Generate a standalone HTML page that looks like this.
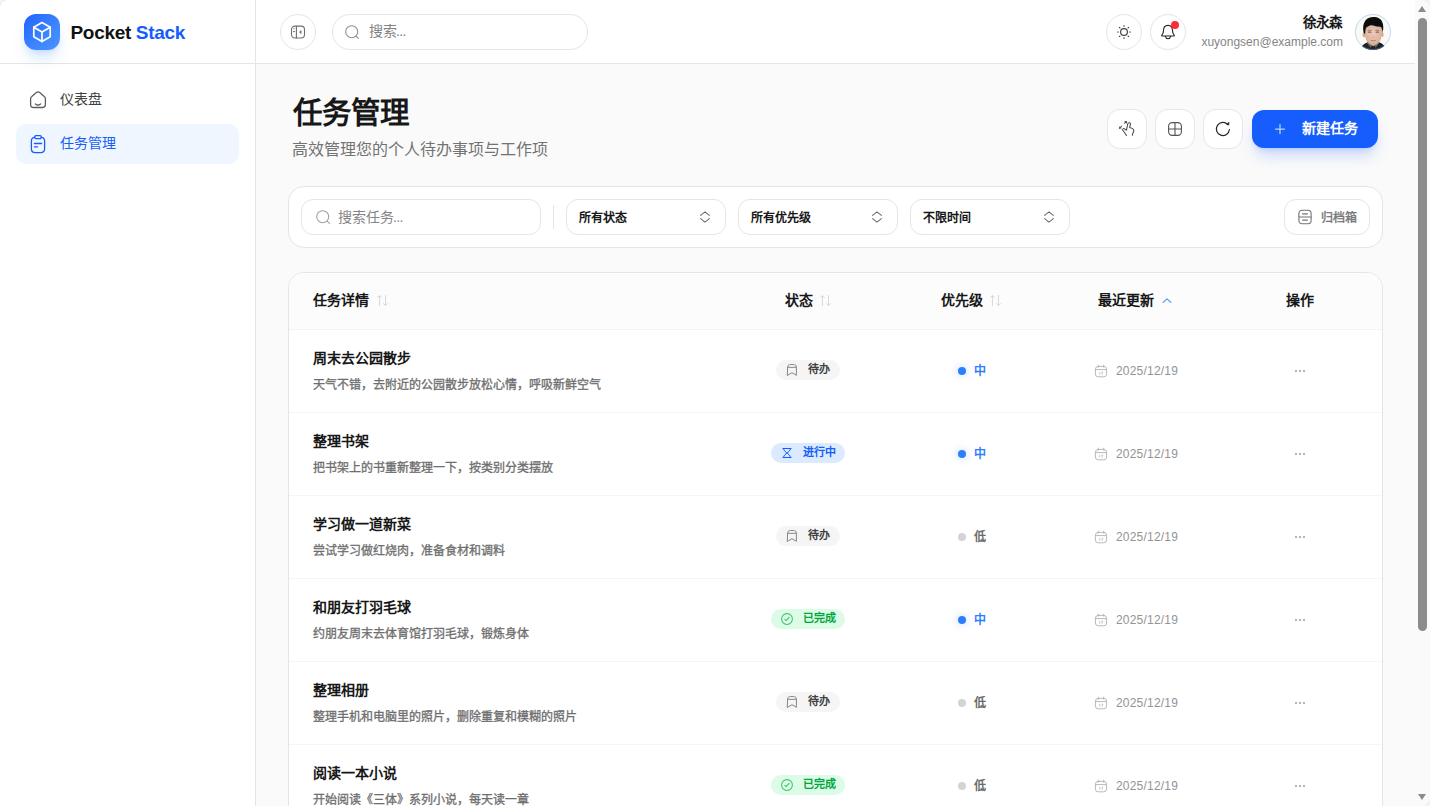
<!DOCTYPE html>
<html lang="zh-CN">
<head>
<meta charset="utf-8">
<title>Pocket Stack</title>
<style>
*{box-sizing:border-box;margin:0;padding:0}
html,body{width:1430px;height:806px;overflow:hidden;background:#fafafa}
body{font-family:"Liberation Sans",sans-serif;color:#171717;position:relative;-webkit-font-smoothing:antialiased}
.abs{position:absolute}
svg{display:block;overflow:visible}
.ic{fill:none;stroke:currentColor;stroke-linecap:round;stroke-linejoin:round}

/* sidebar */
#sidebar{left:0;top:0;width:256px;height:806px;background:#fff;border-right:1px solid #e5e5e5}
#logoRow{left:0;top:0;width:255px;height:64px;border-bottom:1px solid #e5e5e5}
#logo{left:24px;top:14px;width:36px;height:36px;border-radius:12px;background:linear-gradient(135deg,#1f62ff 0%,#3d86ff 60%,#4a94ff 100%);box-shadow:0 10px 15px -3px rgba(43,127,255,.22),0 4px 6px -4px rgba(43,127,255,.22)}
#brand{left:70.5px;top:20.6px;font-size:19px;font-weight:700;line-height:24px;white-space:nowrap;letter-spacing:-0.32px;color:#111}
#brand b{color:#155dfc}
.nav{left:16px;width:223px;height:40px;border-radius:10px;font-size:14px;line-height:40px;color:#404040}
.nav .t{position:absolute;left:44px;top:-0.2px;white-space:nowrap}
.nav.on .t{top:-1.3px}
.nav svg{position:absolute;left:12px;top:10px;color:#5c5c5c}
.nav.on{background:#eff6ff;color:#155dfc;font-weight:500}
.nav.on svg{color:#155dfc}

/* header */
#header{left:256px;top:0;width:1159px;height:64px;background:#fff;border-bottom:1px solid #e5e5e5}
.cbtn{width:36px;height:36px;border-radius:50%;border:1px solid #e5e5e5;background:#fff;top:14px;color:#525252}
#hsearch{left:332px;top:14px;width:256px;height:36px;border-radius:18px;border:1px solid #e5e5e5;background:#fff}
#hsearch .ph{position:absolute;left:36px;top:0;line-height:33px;font-size:14px;color:#828282}
#uname{right:87.8px;top:13px;font-size:13.5px;font-weight:700;line-height:20px;color:#171717;white-space:nowrap}
#umail{right:87px;top:33.5px;font-size:12px;line-height:16px;color:#858585;white-space:nowrap;letter-spacing:0px}
#avatar{left:1355px;top:14px;width:36px;height:36px;border-radius:50%;overflow:hidden;background:#fafaf6}
#avring{left:1354.7px;top:13.7px;width:36.6px;height:36.6px;border-radius:50%;border:1px solid rgba(120,165,255,.42)}

/* scrollbar */
#sb{left:1415px;top:0;width:15px;height:806px;background:#fafafa}
#sb .thumb{position:absolute;left:3px;top:18px;width:9px;height:613px;border-radius:5px;background:#8b8b8b}
#sb .up{position:absolute;left:3.3px;top:6px;width:0;height:0;border-left:4.3px solid transparent;border-right:4.3px solid transparent;border-bottom:6px solid #8b8b8b}
#sb .dn{position:absolute;left:3.3px;top:794px;width:0;height:0;border-left:4.3px solid transparent;border-right:4.3px solid transparent;border-top:6px solid #8b8b8b}

/* title */
#title{left:292.5px;top:93.4px;font-size:29.5px;font-weight:700;line-height:40px;letter-spacing:-0.8px;color:#171717;white-space:nowrap}
#sub{left:292px;top:137.6px;font-size:16px;line-height:24px;color:#737373;white-space:nowrap}
.sbtn{top:109px;width:40px;height:40px;border-radius:13px;border:1px solid #e7e7e7;background:#fff;color:#484848}
#newbtn{left:1252px;top:110px;width:126px;height:38px;border-radius:12px;background:#155dfc;color:#fff;box-shadow:0 10px 15px -3px rgba(21,93,252,.22),0 4px 6px -4px rgba(21,93,252,.22)}
#newbtn .t{position:absolute;left:50px;top:0;line-height:36px;font-size:14px;font-weight:700;white-space:nowrap}

/* filter card */
#fcard{left:288px;top:186px;width:1095px;height:62px;border-radius:16px;border:1px solid #e5e5e5;background:#fff}
.fld{top:199px;height:36px;border-radius:12px;border:1px solid #e5e5e5;background:#fff}
.sel{width:160px;font-size:12px;font-weight:700;color:#171717}
.sel .t{position:absolute;left:11.8px;top:0.6px;line-height:34px;white-space:nowrap}
.sel svg{position:absolute;left:132px;top:11.2px;color:#6b6b6b}

/* table */
#tcard{left:288px;top:272px;width:1095px;height:560px;border-radius:16px;border:1px solid #e5e5e5;background:#fff;overflow:hidden}
#thead{left:0;top:0;width:1093px;height:57px;background:#fcfcfc;border-bottom:1px solid #f4f4f4}
.th{top:0;height:56px;line-height:55px;font-size:14px;font-weight:700;color:#171717;white-space:nowrap}
.row{left:0;width:1093px;height:83px;border-bottom:1px solid #f5f5f5}
.row .tt{position:absolute;left:24px;top:18.2px;font-size:14px;font-weight:700;line-height:20px;color:#171717;white-space:nowrap}
.row .ds{position:absolute;left:24px;top:46.6px;font-size:12px;line-height:16px;color:#6e6e6e;white-space:nowrap;-webkit-text-stroke:0.3px #6e6e6e}
.badge{position:absolute;top:30px;height:20px;border-radius:10px;font-size:11px;font-weight:700;line-height:19px;white-space:nowrap}
.badge svg{position:absolute;left:9px;top:3px}
.badge .t{position:absolute;left:31.8px;top:0px}
.b-todo .t{left:32.1px}
.b-todo{left:487px;width:64px;background:#f5f5f5;color:#404040}
.b-todo svg{color:#858585}
.b-doing{left:482px;width:74px;background:#dbeafe;color:#155dfc}
.b-done{left:482px;width:74px;background:#dcfce7;color:#00a63e}
.b-done svg{color:#3fc272}
.pri{position:absolute;left:669px;top:32px;height:18px;font-size:12px;font-weight:700;line-height:18px;white-space:nowrap}
.pri i{position:absolute;left:0;top:5px;width:8px;height:8px;border-radius:50%}
.pri span{position:absolute;left:15.7px;top:0.1px}
.p-mid{color:#2b7fff}
.p-mid i{background:#2b7fff;box-shadow:0 0 8px rgba(43,127,255,.35)}
.p-low{color:#6b6b6b}
.p-low i{background:#d4d4d4}
.date{position:absolute;left:805px;top:32px;height:18px;font-size:12px;line-height:18px;color:#949494;white-space:nowrap}
.date svg{position:absolute;left:0;top:2px;color:#b5b5b5}
.date span{position:absolute;left:22px;top:0;letter-spacing:0.2px}
.dots{position:absolute;left:1004px;top:34px;color:#9a9a9a}
</style>
</head>
<body>
<!-- SIDEBAR -->
<div id="sidebar" class="abs">
  <div id="logoRow" class="abs"></div>
  <div id="logo" class="abs">
    <svg width="36" height="36" viewBox="0 0 36 36"><g fill="none" stroke="#fff" stroke-width="1.7" stroke-linejoin="round" stroke-linecap="round"><path d="M18 8.6 L26.2 13.2 L26.2 22.8 L18 27.4 L9.8 22.8 L9.8 13.2 Z"/><path d="M9.8 13.2 L18 17.9 L26.2 13.2 M18 17.9 L18 27.4"/></g></svg>
  </div>
  <div id="brand" class="abs">Pocket <b>Stack</b></div>

  <div class="nav abs" style="top:79px">
    <svg width="20" height="20" viewBox="0 0 20 20" class="ic" stroke-width="1.3"><path d="M2.6 9.6 C2.6 8.6 3 8 3.8 7.4 L8.3 3.6 C9.3 2.8 10.7 2.8 11.7 3.6 L16.2 7.4 C17 8 17.4 8.6 17.4 9.6 L17.4 15.6 C17.4 17.6 16.5 18.5 14.5 18.5 L5.5 18.5 C3.5 18.5 2.6 17.6 2.6 15.6 Z"/><path d="M7.4 15 C8.9 16.2 11.1 16.2 12.6 15"/></svg>
    <span class="t">仪表盘</span>
  </div>
  <div class="nav on abs" style="top:124px">
    <svg width="20" height="20" viewBox="0 0 20 20" class="ic" stroke-width="1.3"><path d="M13.3 3.4 C15.7 3.5 16.6 4.5 16.6 7.1 L16.6 14.8 C16.6 17.6 15.6 18.6 12.8 18.6 L7.2 18.6 C4.4 18.6 3.4 17.6 3.4 14.8 L3.4 7.2 C3.4 4.5 4.3 3.5 6.7 3.4"/><rect x="6.7" y="1.7" width="6.6" height="2.9" rx="1.3"/><path d="M6.4 9.5 L13.6 9.5 M6.4 12.8 L9.6 12.8"/></svg>
    <span class="t">任务管理</span>
  </div>
</div>

<!-- HEADER -->
<div id="header" class="abs"></div>
<div class="cbtn abs" style="left:280px">
  <svg class="ic abs" style="left:9px;top:9px;color:#6e6e6e" width="16" height="16" viewBox="0 0 16 16" stroke-width="1.1"><rect x="1.5" y="2.1" width="13" height="11.9" rx="3.4"/><path d="M6.4 2.2 L6.4 13.9"/><path d="M3.6 4.7 L4.3 4.7" stroke-width="0.8"/><path d="M3.4 7.6 L4.7 7.6" stroke-width="1"/><path d="M10.9 6.8 L9.5 8.1 L10.9 9.4 Z" fill="currentColor" stroke-width="0.7"/></svg>
</div>
<div id="hsearch" class="abs">
  <svg class="ic abs" style="left:11px;top:9px;color:#8f8f8f" width="16" height="16" viewBox="0 0 16 16" stroke-width="1.1"><circle cx="7.7" cy="7.7" r="6"/><path d="M12.3 12.3 L14.4 14.4"/></svg>
  <span class="ph">搜索<span style="letter-spacing:-0.6px;margin-left:-1px">...</span></span>
</div>
<div class="cbtn abs" style="left:1106px">
  <svg class="ic abs" style="left:9px;top:9px;color:#404040" width="16" height="16" viewBox="0 0 16 16" stroke-width="1.15"><circle cx="8" cy="8" r="3.4"/><path d="M8 1.6v.7M8 13.7v.7M1.6 8h.7M13.7 8h.7M3.5 3.5l.45.45M12.05 12.05l.45.45M12.5 3.5l-.45.45M3.95 12.05l-.45.45"/></svg>
</div>
<div class="cbtn abs" style="left:1150px">
  <svg class="ic abs" style="left:9px;top:8.2px;color:#262626" width="16" height="16" viewBox="0 0 16 16" stroke-width="1.15"><path d="M3.4 8.3 C3.4 4.5 5.3 2.4 8 2.4 C10.7 2.4 12.6 4.5 12.6 8.3 C12.6 10.2 13.3 11.2 14.1 12.1 C14.4 12.5 14.2 13 13.7 13 L2.3 13 C1.8 13 1.6 12.5 1.9 12.1 C2.7 11.2 3.4 10.2 3.4 8.3 Z"/><path d="M5.4 13.3 C5.8 14.9 6.8 15.7 8 15.7 C9.2 15.7 10.2 14.9 10.6 13.3"/></svg>
  <i class="abs" style="left:20px;top:6px;width:8px;height:8px;border-radius:50%;background:#fb2c36"></i>
</div>
<div id="uname" class="abs">徐永森</div>
<div id="umail" class="abs">xuyongsen@example.com</div>
<div id="avatar" class="abs">
  <svg width="36" height="36" viewBox="0 0 36 36">
    <defs>
      <filter id="bl" x="-20%" y="-20%" width="140%" height="140%"><feGaussianBlur stdDeviation="0.55"/></filter>
      <filter id="bl2" x="-20%" y="-20%" width="140%" height="140%"><feGaussianBlur stdDeviation="0.9"/></filter>
      <radialGradient id="skin" cx="50%" cy="45%" r="60%"><stop offset="0" stop-color="#ecc9b6"/><stop offset="0.7" stop-color="#deb6a1"/><stop offset="1" stop-color="#c99c86"/></radialGradient>
    </defs>
    <rect width="36" height="36" fill="#fafaf5"/>
    <g filter="url(#bl)">
      <!-- clothing -->
      <path d="M4.5 37 C6 31.5 9.5 29.3 13.2 28.2 L18 31.5 L23.2 28 C27 29 30 31 31.5 37 Z" fill="#1f2225"/>
      <path d="M11.6 28.8 L13.4 27.6 L17 31.8 L15.5 34 Z M24.6 28.6 L23 27.4 L19.2 31.8 L20.8 34 Z" fill="#5b5f61"/>
      <!-- neck -->
      <path d="M13.4 25.5 L23 25.5 L22.8 29 L18.2 32.2 L13.6 29.2 Z" fill="#d2a48e"/>
      <!-- ears -->
      <ellipse cx="9.1" cy="20.6" rx="1.5" ry="2.7" fill="#d6a790"/>
      <ellipse cx="27.3" cy="20.4" rx="1.3" ry="2.5" fill="#d6a790"/>
      <!-- face -->
      <path d="M9.8 17 C9.8 11.5 13 9.5 18.3 9.5 C23.6 9.5 26.9 11.5 26.9 17 C26.9 22 26.3 25.5 23.8 28.6 C22.3 30.6 20.3 31.6 18.4 31.6 C16.4 31.6 14.4 30.6 12.9 28.6 C10.4 25.5 9.8 22 9.8 17 Z" fill="url(#skin)"/>
      <!-- hair -->
      <path d="M8.9 19.4 C7.2 13.5 8.4 6.4 13.6 4.1 C16.6 2.7 21.2 2.7 24.2 4.4 C28.6 6.9 28.9 13.4 27.7 18.6 C27.3 16.6 27 14.6 26 13 C24.6 12.6 22.6 12.9 20.6 12.3 C18.6 11.7 16.6 11 15 11.6 C13.4 12.2 12.2 13 11.2 13.4 C10.4 15 10.2 17.4 10.1 19.6 Z" fill="#0b0b0d"/>
      <!-- brows / eyes -->
      <path d="M12.8 16.7 C13.9 16.1 15.4 16.1 16.6 16.5 M20.4 16.5 C21.6 16.1 23.1 16.1 24.2 16.7" stroke="#5b4137" stroke-width="0.7" fill="none" opacity="0.75"/>
      <path d="M13.2 18.3 C14.2 17.9 15.4 17.9 16.3 18.3 M20.8 18.3 C21.7 17.9 22.9 17.9 23.9 18.3" stroke="#3b2a26" stroke-width="0.9" fill="none" opacity="0.85"/>
      <!-- nose + mouth -->
      <path d="M17.4 22.9 C18 23.4 19 23.4 19.7 22.9" stroke="#b98270" stroke-width="0.7" fill="none" opacity="0.8"/>
      <path d="M15.9 26.3 C17.2 26.9 19.6 26.9 20.9 26.3" stroke="#b5726b" stroke-width="0.9" fill="none"/>
    </g>
  </svg>
</div>

<div id="avring" class="abs"></div>
<!-- SCROLLBAR -->
<div id="sb" class="abs"><i class="up"></i><i class="thumb"></i><i class="dn"></i></div>

<i class="abs" style="left:-1px;top:-1px;width:18px;height:18px;border-top-left-radius:9px;border:1px solid #ebebeb;border-right:none;border-bottom:none;box-shadow:-3px -3px 0 3px #f4f4f4"></i>
<i class="abs" style="left:1413px;top:-1px;width:18px;height:18px;border-top-right-radius:9px;border:1px solid #ebebeb;border-left:none;border-bottom:none;box-shadow:3px -3px 0 3px #f4f4f4"></i>
<i class="abs" style="left:1413px;top:789px;width:18px;height:18px;border-bottom-right-radius:9px;border:1px solid #ebebeb;border-left:none;border-top:none;box-shadow:3px 3px 0 3px #f4f4f4"></i>
<!-- TITLE -->
<div id="title" class="abs">任务管理</div>
<div id="sub" class="abs">高效管理您的个人待办事项与工作项</div>

<div class="sbtn abs" style="left:1107px">
  <svg class="ic abs" style="left:11px;top:11px" width="16" height="16" viewBox="0 0 16 16" stroke-width="1.05"><path d="M3.3 8.5 L7.5 14.5"/><path d="M4.2 7.6 C5.2 7.1 6 8.7 7.5 9.2 L8.75 2.9 C8.95 1.2 11.7 1.3 11.5 3.1 L10.6 6.4 C12.5 6.9 14.8 7.5 14.8 9.4 C14.8 11.5 13.4 12.2 13.4 14.3"/><path d="M5.2 2.4 L7.6 0.7 M5.9 0.6 L7.7 0.6 L7.3 2.2" stroke-width="0.95"/><path d="M2.9 4.9 L0.5 7.2 M0.9 5.7 L0.4 7.3 L2.2 7" stroke-width="0.95"/></svg>
</div>
<div class="sbtn abs" style="left:1155px">
  <svg class="ic abs" style="left:11px;top:11px;color:#525252" width="16" height="16" viewBox="0 0 16 16" stroke-width="1.1"><rect x="1.6" y="1.6" width="12.8" height="12.8" rx="3.6"/><path d="M8 1.7 L8 14.3 M1.7 8 L14.3 8"/></svg>
</div>
<div class="sbtn abs" style="left:1203px">
  <svg class="ic abs" style="left:11px;top:11px;color:#262626" width="16" height="16" viewBox="0 0 16 16" stroke-width="1.2"><path d="M14.42 8.57 A6.55 6.55 0 1 1 12.77 3.62"/><path d="M13.8 1.5 L13.8 4.0 L12.0 3.4 Z" fill="currentColor" stroke-width="0.8"/></svg>
</div>
<div id="newbtn" class="abs">
  <svg class="ic abs" style="left:22px;top:13px;color:rgba(255,255,255,.72)" width="12" height="12" viewBox="0 0 12 12" stroke-width="1.25"><path d="M6 1.6 L6 10.4 M1.6 6 L10.4 6"/></svg>
  <span class="t">新建任务</span>
</div>

<!-- FILTER CARD -->
<div id="fcard" class="abs"></div>
<div class="fld abs" style="left:301px;width:240px">
  <svg class="ic abs" style="left:12.7px;top:9px;color:#a1a1a1" width="16" height="16" viewBox="0 0 16 16" stroke-width="1.1"><circle cx="7.7" cy="7.7" r="6"/><path d="M12.3 12.3 L14.4 14.4"/></svg>
  <span class="abs" style="left:36px;top:0.5px;line-height:33px;font-size:14px;color:#858585;white-space:nowrap">搜索任务<span style="letter-spacing:-0.6px;margin-left:-1px">...</span></span>
</div>
<i class="abs" style="left:553px;top:205px;width:1px;height:24px;background:#e5e5e5"></i>
<div class="fld sel abs" style="left:566px"><span class="t">所有状态</span><svg class="ic" width="12" height="12" viewBox="0 0 12 12" stroke-width="1.05"><path d="M1.6 4.4 L6 0.9 L10.4 4.4 M1.6 7.6 L6 11.1 L10.4 7.6"/></svg></div>
<div class="fld sel abs" style="left:738px"><span class="t">所有优先级</span><svg class="ic" width="12" height="12" viewBox="0 0 12 12" stroke-width="1.05"><path d="M1.6 4.4 L6 0.9 L10.4 4.4 M1.6 7.6 L6 11.1 L10.4 7.6"/></svg></div>
<div class="fld sel abs" style="left:910px"><span class="t">不限时间</span><svg class="ic" width="12" height="12" viewBox="0 0 12 12" stroke-width="1.05"><path d="M1.6 4.4 L6 0.9 L10.4 4.4 M1.6 7.6 L6 11.1 L10.4 7.6"/></svg></div>
<div class="fld abs" style="left:1284px;width:86px">
  <svg class="ic abs" style="left:12px;top:9px;color:#737373" width="16" height="16" viewBox="0 0 16 16" stroke-width="1.1"><rect x="1.9" y="1.3" width="12.2" height="13.4" rx="3.2"/><path d="M2 8 L14 8 M5.6 4.9 L10.4 4.9 M5.6 11.1 L10.4 11.1"/></svg>
  <span class="abs" style="left:36px;top:0.6px;line-height:34px;font-size:12px;color:#737373;white-space:nowrap;-webkit-text-stroke:0.35px #737373">归档箱</span>
</div>

<!-- TABLE -->
<div id="tcard" class="abs">
  <div id="thead" class="abs">
    <div class="th abs" style="left:24px">任务详情</div>
    <div class="th abs" style="left:496px">状态</div>
    <div class="th abs" style="left:652px">优先级</div>
    <div class="th abs" style="left:809px">最近更新</div>
    <div class="th abs" style="left:997px">操作</div>
    <svg class="ic abs" style="left:86.6px;top:20.3px;color:#dadada" width="14" height="14" viewBox="0 0 14 14" stroke-width="1"><path d="M3.5 12.6 L3.5 2.6 M1.6 4.5 L3.5 2.5 L5.4 4.5"/><path d="M9.5 2.4 L9.5 12.4 M7.6 10.5 L9.5 12.5 L11.4 10.5"/></svg>
    <svg class="ic abs" style="left:529.5px;top:20.3px;color:#dadada" width="14" height="14" viewBox="0 0 14 14" stroke-width="1"><path d="M3.5 12.6 L3.5 2.6 M1.6 4.5 L3.5 2.5 L5.4 4.5"/><path d="M9.5 2.4 L9.5 12.4 M7.6 10.5 L9.5 12.5 L11.4 10.5"/></svg>
    <svg class="ic abs" style="left:700px;top:20.3px;color:#dadada" width="14" height="14" viewBox="0 0 14 14" stroke-width="1"><path d="M3.5 12.6 L3.5 2.6 M1.6 4.5 L3.5 2.5 L5.4 4.5"/><path d="M9.5 2.4 L9.5 12.4 M7.6 10.5 L9.5 12.5 L11.4 10.5"/></svg>
    <svg class="ic abs" style="left:871px;top:21.4px;color:#5592ff" width="14" height="14" viewBox="0 0 14 14" stroke-width="1.15"><path d="M3.1 8.4 L7 4.9 L10.9 8.4"/></svg>
  </div>
  <div class="row abs" style="top:57px">
    <div class="tt">周末去公园散步</div><div class="ds">天气不错，去附近的公园散步放松心情，呼吸新鲜空气</div>
    <div class="badge b-todo"><svg class="ic" width="14" height="14" viewBox="0 0 14 14" stroke-width="1"><path d="M2.6 4.6 C2.6 2.4 3.4 1.5 5.6 1.5 L8.4 1.5 C10.6 1.5 11.4 2.4 11.4 4.6 L11.4 12.3 L7 9.7 L2.6 12.3 Z"/><path d="M2.7 4.3 L11.3 4.3"/></svg><span class="t">待办</span></div>
    <div class="pri p-mid"><i></i><span>中</span></div>
    <div class="date"><svg class="ic" width="14" height="14" viewBox="0 0 14 14" stroke-width="0.95"><rect x="1.4" y="2.4" width="11.2" height="10.4" rx="2.8"/><path d="M1.6 5.6 L12.4 5.6 M4.3 1.2 L4.3 3.2 M9.7 1.2 L9.7 3.2"/><path d="M5.7 8.3 L5.7 10.4 M7.6 8.2 L8.9 8.2 L8 10.4" stroke-width="0.7"/></svg><span>2025/12/19</span></div>
    <svg class="dots" width="14" height="14" viewBox="0 0 14 14" fill="none" stroke="currentColor" stroke-width="0.9"><circle cx="3" cy="7" r="0.75"/><circle cx="7" cy="7" r="0.75"/><circle cx="11" cy="7" r="0.75"/></svg>
  </div>
  <div class="row abs" style="top:140px">
    <div class="tt">整理书架</div><div class="ds">把书架上的书重新整理一下，按类别分类摆放</div>
    <div class="badge b-doing"><svg class="ic" width="14" height="14" viewBox="0 0 14 14" stroke-width="1"><path d="M2.9 2.5 L11.1 2.5 M2.9 11.5 L11.1 11.5 M3.5 2.6 C3.5 5 6.2 6 7 7 C7.8 8 10.5 9 10.5 11.4 M10.5 2.6 C10.5 5 7.8 6 7 7 C6.2 8 3.5 9 3.5 11.4"/></svg><span class="t">进行中</span></div>
    <div class="pri p-mid"><i></i><span>中</span></div>
    <div class="date"><svg class="ic" width="14" height="14" viewBox="0 0 14 14" stroke-width="0.95"><rect x="1.4" y="2.4" width="11.2" height="10.4" rx="2.8"/><path d="M1.6 5.6 L12.4 5.6 M4.3 1.2 L4.3 3.2 M9.7 1.2 L9.7 3.2"/><path d="M5.7 8.3 L5.7 10.4 M7.6 8.2 L8.9 8.2 L8 10.4" stroke-width="0.7"/></svg><span>2025/12/19</span></div>
    <svg class="dots" width="14" height="14" viewBox="0 0 14 14" fill="none" stroke="currentColor" stroke-width="0.9"><circle cx="3" cy="7" r="0.75"/><circle cx="7" cy="7" r="0.75"/><circle cx="11" cy="7" r="0.75"/></svg>
  </div>
  <div class="row abs" style="top:223px">
    <div class="tt">学习做一道新菜</div><div class="ds">尝试学习做红烧肉，准备食材和调料</div>
    <div class="badge b-todo"><svg class="ic" width="14" height="14" viewBox="0 0 14 14" stroke-width="1"><path d="M2.6 4.6 C2.6 2.4 3.4 1.5 5.6 1.5 L8.4 1.5 C10.6 1.5 11.4 2.4 11.4 4.6 L11.4 12.3 L7 9.7 L2.6 12.3 Z"/><path d="M2.7 4.3 L11.3 4.3"/></svg><span class="t">待办</span></div>
    <div class="pri p-low"><i></i><span>低</span></div>
    <div class="date"><svg class="ic" width="14" height="14" viewBox="0 0 14 14" stroke-width="0.95"><rect x="1.4" y="2.4" width="11.2" height="10.4" rx="2.8"/><path d="M1.6 5.6 L12.4 5.6 M4.3 1.2 L4.3 3.2 M9.7 1.2 L9.7 3.2"/><path d="M5.7 8.3 L5.7 10.4 M7.6 8.2 L8.9 8.2 L8 10.4" stroke-width="0.7"/></svg><span>2025/12/19</span></div>
    <svg class="dots" width="14" height="14" viewBox="0 0 14 14" fill="none" stroke="currentColor" stroke-width="0.9"><circle cx="3" cy="7" r="0.75"/><circle cx="7" cy="7" r="0.75"/><circle cx="11" cy="7" r="0.75"/></svg>
  </div>
  <div class="row abs" style="top:306px">
    <div class="tt">和朋友打羽毛球</div><div class="ds">约朋友周末去体育馆打羽毛球，锻炼身体</div>
    <div class="badge b-done"><svg class="ic" width="14" height="14" viewBox="0 0 14 14" stroke-width="1.05"><circle cx="7" cy="7" r="5.4"/><path d="M4.9 7.4 L6.2 8.7 L9.1 5.4" stroke-width="1.1"/></svg><span class="t">已完成</span></div>
    <div class="pri p-mid"><i></i><span>中</span></div>
    <div class="date"><svg class="ic" width="14" height="14" viewBox="0 0 14 14" stroke-width="0.95"><rect x="1.4" y="2.4" width="11.2" height="10.4" rx="2.8"/><path d="M1.6 5.6 L12.4 5.6 M4.3 1.2 L4.3 3.2 M9.7 1.2 L9.7 3.2"/><path d="M5.7 8.3 L5.7 10.4 M7.6 8.2 L8.9 8.2 L8 10.4" stroke-width="0.7"/></svg><span>2025/12/19</span></div>
    <svg class="dots" width="14" height="14" viewBox="0 0 14 14" fill="none" stroke="currentColor" stroke-width="0.9"><circle cx="3" cy="7" r="0.75"/><circle cx="7" cy="7" r="0.75"/><circle cx="11" cy="7" r="0.75"/></svg>
  </div>
  <div class="row abs" style="top:389px">
    <div class="tt">整理相册</div><div class="ds">整理手机和电脑里的照片，删除重复和模糊的照片</div>
    <div class="badge b-todo"><svg class="ic" width="14" height="14" viewBox="0 0 14 14" stroke-width="1"><path d="M2.6 4.6 C2.6 2.4 3.4 1.5 5.6 1.5 L8.4 1.5 C10.6 1.5 11.4 2.4 11.4 4.6 L11.4 12.3 L7 9.7 L2.6 12.3 Z"/><path d="M2.7 4.3 L11.3 4.3"/></svg><span class="t">待办</span></div>
    <div class="pri p-low"><i></i><span>低</span></div>
    <div class="date"><svg class="ic" width="14" height="14" viewBox="0 0 14 14" stroke-width="0.95"><rect x="1.4" y="2.4" width="11.2" height="10.4" rx="2.8"/><path d="M1.6 5.6 L12.4 5.6 M4.3 1.2 L4.3 3.2 M9.7 1.2 L9.7 3.2"/><path d="M5.7 8.3 L5.7 10.4 M7.6 8.2 L8.9 8.2 L8 10.4" stroke-width="0.7"/></svg><span>2025/12/19</span></div>
    <svg class="dots" width="14" height="14" viewBox="0 0 14 14" fill="none" stroke="currentColor" stroke-width="0.9"><circle cx="3" cy="7" r="0.75"/><circle cx="7" cy="7" r="0.75"/><circle cx="11" cy="7" r="0.75"/></svg>
  </div>
  <div class="row abs" style="top:472px">
    <div class="tt">阅读一本小说</div><div class="ds">开始阅读《三体》系列小说，每天读一章</div>
    <div class="badge b-done"><svg class="ic" width="14" height="14" viewBox="0 0 14 14" stroke-width="1.05"><circle cx="7" cy="7" r="5.4"/><path d="M4.9 7.4 L6.2 8.7 L9.1 5.4" stroke-width="1.1"/></svg><span class="t">已完成</span></div>
    <div class="pri p-low"><i></i><span>低</span></div>
    <div class="date"><svg class="ic" width="14" height="14" viewBox="0 0 14 14" stroke-width="0.95"><rect x="1.4" y="2.4" width="11.2" height="10.4" rx="2.8"/><path d="M1.6 5.6 L12.4 5.6 M4.3 1.2 L4.3 3.2 M9.7 1.2 L9.7 3.2"/><path d="M5.7 8.3 L5.7 10.4 M7.6 8.2 L8.9 8.2 L8 10.4" stroke-width="0.7"/></svg><span>2025/12/19</span></div>
    <svg class="dots" width="14" height="14" viewBox="0 0 14 14" fill="none" stroke="currentColor" stroke-width="0.9"><circle cx="3" cy="7" r="0.75"/><circle cx="7" cy="7" r="0.75"/><circle cx="11" cy="7" r="0.75"/></svg>
  </div>
  <div class="row abs" style="top:555px">
    <div class="tt">更新个人简历</div><div class="ds">补充最近的项目经历和技能</div>
    <div class="badge b-todo"><svg class="ic" width="14" height="14" viewBox="0 0 14 14" stroke-width="1"><path d="M2.6 4.6 C2.6 2.4 3.4 1.5 5.6 1.5 L8.4 1.5 C10.6 1.5 11.4 2.4 11.4 4.6 L11.4 12.3 L7 9.7 L2.6 12.3 Z"/><path d="M2.7 4.3 L11.3 4.3"/></svg><span class="t">待办</span></div>
    <div class="pri p-mid"><i></i><span>中</span></div>
    <div class="date"><svg class="ic" width="14" height="14" viewBox="0 0 14 14" stroke-width="0.95"><rect x="1.4" y="2.4" width="11.2" height="10.4" rx="2.8"/><path d="M1.6 5.6 L12.4 5.6 M4.3 1.2 L4.3 3.2 M9.7 1.2 L9.7 3.2"/><path d="M5.7 8.3 L5.7 10.4 M7.6 8.2 L8.9 8.2 L8 10.4" stroke-width="0.7"/></svg><span>2025/12/19</span></div>
    <svg class="dots" width="14" height="14" viewBox="0 0 14 14" fill="none" stroke="currentColor" stroke-width="0.9"><circle cx="3" cy="7" r="0.75"/><circle cx="7" cy="7" r="0.75"/><circle cx="11" cy="7" r="0.75"/></svg>
  </div>
</div>
</body>
</html>
